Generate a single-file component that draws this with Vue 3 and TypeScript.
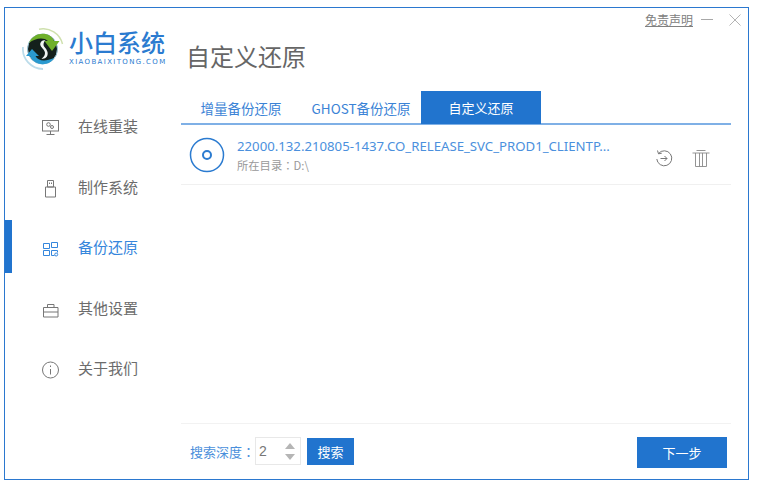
<script setup lang="ts">
const navItems = [
  { key: 'online', label: '在线重装', active: false },
  { key: 'usb', label: '制作系统', active: false },
  { key: 'backup', label: '备份还原', active: true },
  { key: 'settings', label: '其他设置', active: false },
  { key: 'about', label: '关于我们', active: false },
]
const tabs = [
  { label: '增量备份还原', active: false },
  { label: 'GHOST备份还原', active: false },
  { label: '自定义还原', active: true },
]
</script>

<template>
  <div class="window">
    <div class="winbar">
      <a class="disclaimer">免责声明</a>
      <svg class="winicon" width="14" height="14" viewBox="0 0 14 14"><path d="M1 6.500h12" stroke="#a8a8a8" fill="none" /></svg>
      <svg class="winicon" width="14" height="14" viewBox="0 0 14 14"><path d="M1.500 1.500l11 11M12.500 1.500l-11 11" stroke="#b4b4b4" fill="none" /></svg>
    </div>

    <aside class="sidebar">
      <div class="logo">
        <svg class="logo-mark" width="42" height="42" viewBox="0 0 42 42">
          <path d="M17 1.200A20 20 0 0 1 40.500 16" fill="none" stroke="#cfe0ae" stroke-width="1.500" />
          <path d="M1 19A20 20 0 0 0 21 41" fill="none" stroke="#bcdcea" stroke-width="1.800" />
          <circle cx="20.500" cy="21" r="15" fill="#14201c" stroke="#9cc8dc" stroke-width="1" />
          <path d="M7 15C11 4 28 2 32 13l5.500 0-7.500 10-7.500-10 3.500 0C22 9 13 10 7 15z" fill="#6fb02a" />
          <path d="M10 21l7 7-3.500 0C16 33 23 34 32 30 28 38 13 39 8 28l-4 0z" fill="#2a9ad0" />
          <path d="M23.500 12c-4 0-6 3-5 5.500s4.500 4.500 4.500 7.500-2 4.500-3.500 5.500c4 1 7-2.500 6-6.500s-4-5-4-7.500c0-1.800 1-3.500 2-4.500z" fill="#f1f5f3" />
        </svg>
        <div class="logo-text">
          <div class="logo-cn">小白系统</div>
          <div class="logo-en">XIAOBAIXITONG.COM</div>
        </div>
      </div>
      <nav class="nav">
        <div v-for="item in navItems" :key="item.key" class="nav-item" :class="{ active: item.active }">
          <svg class="nav-icon" width="20" height="20" viewBox="0 0 20 20" fill="none" stroke="currentColor">
            <template v-if="item.key === 'online'">
              <rect x="2.500" y="3.500" width="16" height="10.500" />
              <circle cx="8.500" cy="7.500" r="1.800" />
              <circle cx="12" cy="10" r="1.500" />
              <path d="M10.500 14v3M6.500 17.500h8" />
            </template>
            <template v-else-if="item.key === 'usb'">
              <path d="M7.500 2.500h6v6.500h-6zM5.500 9h10v10h-10zM9.500 4.500v1.500M11.500 4.500v1.500" />
            </template>
            <template v-else-if="item.key === 'backup'">
              <path d="M3.500 5.500h6v5h-6zM3.500 12.500h6v5h-6zM11.500 4.500h6v5h-6zM11.500 12.500h6v2M11.500 12.500v5h3" />
              <circle cx="16.200" cy="16.500" r="1.500" />
            </template>
            <template v-else-if="item.key === 'settings'">
              <path d="M3.500 8.500h14.500v9.500h-14.500zM7.500 8.500v-3h6.500v3M3.500 13h14.500" />
            </template>
            <template v-else>
              <circle cx="10.500" cy="11" r="8" />
              <path d="M10.500 10v5.500M10.500 6.500v1.500" />
            </template>
          </svg>
          <span class="nav-label">{{ item.label }}</span>
        </div>
      </nav>
    </aside>

    <main class="main">
      <h1 class="title">自定义还原</h1>
      <div class="tabs">
        <div v-for="tab in tabs" :key="tab.label" class="tab" :class="{ active: tab.active }">{{ tab.label }}</div>
      </div>
      <div class="list">
        <div class="row">
          <svg class="disc" width="36" height="36" viewBox="0 0 36 36" fill="none" stroke="#2b7bd0">
            <circle cx="18" cy="18" r="16.500" stroke-width="1.500" />
            <circle cx="18" cy="18" r="4" stroke-width="2" />
          </svg>
          <div class="file">
            <div class="file-name">22000.132.210805-1437.CO_RELEASE_SVC_PROD1_CLIENTP...</div>
            <div class="file-path">所在目录<span class="colon">：</span>D:\</div>
          </div>
          <div class="actions">
            <svg width="18" height="18" viewBox="0 0 18 18" fill="none" stroke="#777">
              <path d="M3.500 4.500a7.500 7.500 0 1 1-1.700 5.500" />
              <path d="M2.500 1.500l1 3.300 3.300-.6" />
              <path d="M5.500 9.500h6.500M9.500 7l2.500 2.500-2.500 2.500" />
            </svg>
            <svg width="18" height="18" viewBox="0 0 18 18" fill="none" stroke="#888" stroke-width="0.900">
              <path d="M4.500 1.500h9M0.500 4h17M3.500 4v13.500h11v-13.500M7.500 4v13.500M10.500 4v13.500" />
            </svg>
          </div>
        </div>
      </div>
      <footer class="footer">
        <div class="search">
          <span class="search-label">搜索深度<span class="colon">：</span></span>
          <div class="stepper">
            <span class="stepper-value">2</span>
            <span class="stepper-arrows"><i class="up"></i><i class="down"></i></span>
          </div>
          <button class="btn-search">搜索</button>
        </div>
        <button class="btn-next">下一步</button>
      </footer>
    </main>
  </div>
</template>

<style>
html, body { margin: 0; background: #fff; }
</style>

<style scoped>
.window {
  position: relative;
  box-sizing: border-box;
  width: 745px;
  height: 473px;
  margin: 7px 0 0 4px;
  border: 1px solid #2b78cf;
  display: flex;
  background: #fff;
  font-family: "Noto Sans CJK SC", "Liberation Sans", sans-serif;
  overflow: hidden;
}
.winbar {
  position: absolute;
  top: 4px;
  right: 6px;
  display: flex;
  align-items: center;
  gap: 6px;
}
.disclaimer {
  font-size: 12px;
  line-height: 16px;
  color: #808080;
  text-decoration: underline;
  margin-right: 1px;
}
.winbar .winicon:last-child { margin-left: 8px; }
.sidebar { width: 176px; flex: none; display: flex; flex-direction: column; }
.logo {
  display: flex;
  align-items: center;
  gap: 5px;
  padding: 19px 0 0 17px;
  height: 62px;
  box-sizing: border-box;
}
.logo-text { display: flex; flex-direction: column; margin-top: -2px; }
.logo-cn {
  font-family: "Liberation Sans", "Noto Sans CJK SC", sans-serif;
  font-size: 24px;
  line-height: 29px;
  font-weight: 500;
  color: #2b7bd0;
  white-space: nowrap;
}
.logo-en {
  font-family: "DejaVu Sans", sans-serif;
  font-size: 7px;
  line-height: 9px;
  color: #2b7bd0;
  letter-spacing: 1.350px;
  white-space: nowrap;
}
.nav { display: flex; flex-direction: column; margin-top: 26px; }
.nav-item {
  height: 60.500px;
  display: flex;
  align-items: center;
  padding-left: 35px;
  gap: 18px;
  color: #6c6c6c;
  position: relative;
}
.nav-item.active { color: #3586dc; }
.nav-item.active::before {
  content: "";
  position: absolute;
  left: 0;
  top: 3px;
  width: 7px;
  height: 53px;
  background: #2174ce;
}
.nav-icon { flex: none; color: #777; margin-top: 2px; }
.nav-item.active .nav-icon { color: #3586dc; }
.nav-label { font-size: 15px; line-height: 20px; }
.main { flex: 1; display: flex; flex-direction: column; min-width: 0; padding-right: 17px; }
.title {
  margin: 0;
  padding: 30px 0 0 5px;
  font-size: 24px;
  line-height: 36px;
  height: 83px;
  box-sizing: border-box;
  font-weight: 400;
  color: #666;
}
.tabs {
  display: flex;
  border-bottom: 2px solid #7fb0e6;
  height: 34px;
  box-sizing: border-box;
}
.tab {
  width: 120px;
  text-align: center;
  font-size: 13.500px;
  line-height: 34px;
  color: #3b83d6;
}
.tab.active { background: #2174ce; color: #fff; height: 33px; line-height: 33px; font-size: 13px; }
.list { flex: 1; }
.row {
  height: 60px;
  box-sizing: border-box;
  border-bottom: 1px solid #f0f0f0;
  display: flex;
  align-items: center;
  padding: 0 21px 0 8px;
}
.disc { flex: none; }
.file { margin-left: 12px; width: 385px; flex: none; }
.file-name {
  font-size: 13.200px;
  line-height: 19px;
  color: #4b90dd;
  white-space: nowrap;
  font-family: "Noto Sans", "Noto Sans CJK SC", sans-serif;
}
.file-path { font-size: 11.300px; line-height: 16px; margin-top: 1px; color: #999; }
.colon { font-family: "Noto Sans CJK TC", sans-serif; }
.actions { margin-left: auto; display: flex; gap: 19px; margin-top: 6px; }
.footer {
  box-sizing: border-box;
  border-top: 1px solid #f2f2f2;
  display: flex;
  justify-content: space-between;
  align-items: flex-start;
  padding: 13px 4px 0 9px;
  height: 56px;
}
.search { display: flex; align-items: center; }
.search-label { font-size: 13px; color: #4a8fdb; width: 65px; white-space: nowrap; }
.stepper {
  box-sizing: border-box;
  width: 46px;
  height: 28px;
  border: 1px solid #e8e8e8;
  display: flex;
  align-items: center;
  justify-content: space-between;
  padding: 0 5px 0 3px;
}
.stepper-value { font-size: 14px; color: #777; font-family: "Liberation Sans", sans-serif; }
.stepper-arrows { display: flex; flex-direction: column; gap: 5px; }
.stepper-arrows i { width: 0; height: 0; border-left: 5px solid transparent; border-right: 5px solid transparent; display: block; }
.stepper-arrows .up { border-bottom: 6px solid #b5b5b5; }
.stepper-arrows .down { border-top: 6px solid #b5b5b5; }
.btn-search {
  margin-left: 6px;
  width: 47px;
  height: 27px;
  border: 0;
  padding: 0;
  background: #2174ce;
  color: #fff;
  font: inherit;
  font-size: 13px;
}
.btn-next {
  width: 90px;
  height: 31px;
  border: 0;
  padding: 0;
  background: #2174ce;
  color: #fff;
  font: inherit;
  font-size: 13px;
}
</style>
